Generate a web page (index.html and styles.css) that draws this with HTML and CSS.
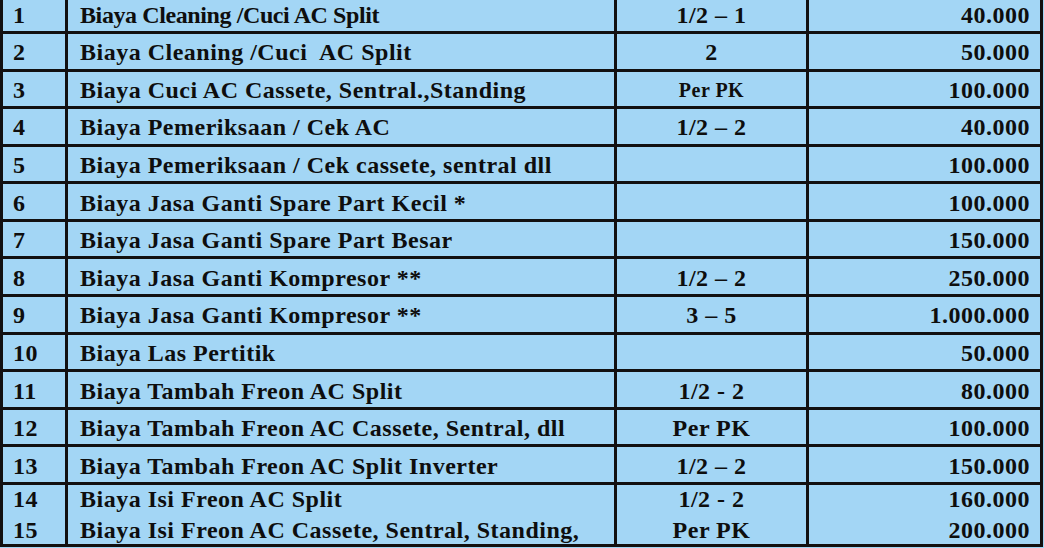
FILE: index.html
```html
<!DOCTYPE html>
<html>
<head>
<meta charset="utf-8">
<link rel="stylesheet" href="styles.css">
</head>
<body>
<div class="frame">
  <div class="table">
    <div class="cell no">1</div><div class="cell desc tight">Biaya Cleaning /Cuci AC Split</div><div class="cell pk">1/2 – 1</div><div class="cell price">40.000</div>
    <div class="cell no">2</div><div class="cell desc">Biaya Cleaning /Cuci&nbsp; AC Split</div><div class="cell pk">2</div><div class="cell price">50.000</div>
    <div class="cell no">3</div><div class="cell desc">Biaya Cuci AC Cassete, Sentral.,Standing</div><div class="cell pk small">Per PK</div><div class="cell price">100.000</div>
    <div class="cell no">4</div><div class="cell desc">Biaya Pemeriksaan / Cek AC</div><div class="cell pk">1/2 – 2</div><div class="cell price">40.000</div>
    <div class="cell no">5</div><div class="cell desc">Biaya Pemeriksaan / Cek cassete, sentral dll</div><div class="cell pk"></div><div class="cell price">100.000</div>
    <div class="cell no">6</div><div class="cell desc">Biaya Jasa Ganti Spare Part Kecil *</div><div class="cell pk"></div><div class="cell price">100.000</div>
    <div class="cell no">7</div><div class="cell desc">Biaya Jasa Ganti Spare Part Besar</div><div class="cell pk"></div><div class="cell price">150.000</div>
    <div class="cell no">8</div><div class="cell desc">Biaya Jasa Ganti Kompresor **</div><div class="cell pk">1/2 – 2</div><div class="cell price">250.000</div>
    <div class="cell no">9</div><div class="cell desc">Biaya Jasa Ganti Kompresor **</div><div class="cell pk">3 – 5</div><div class="cell price">1.000.000</div>
    <div class="cell no">10</div><div class="cell desc">Biaya Las Pertitik</div><div class="cell pk"></div><div class="cell price">50.000</div>
    <div class="cell no">11</div><div class="cell desc">Biaya Tambah Freon AC Split</div><div class="cell pk">1/2 - 2</div><div class="cell price">80.000</div>
    <div class="cell no">12</div><div class="cell desc">Biaya Tambah Freon AC Cassete, Sentral, dll</div><div class="cell pk">Per PK</div><div class="cell price">100.000</div>
    <div class="cell no">13</div><div class="cell desc">Biaya Tambah Freon AC Split Inverter</div><div class="cell pk">1/2 – 2</div><div class="cell price">150.000</div>
    <div class="cell no multi"><span>14</span><span>15</span></div><div class="cell desc multi"><span>Biaya Isi Freon AC Split</span><span>Biaya Isi Freon AC Cassete, Sentral, Standing,</span></div><div class="cell pk multi"><span>1/2 - 2</span><span>Per PK</span></div><div class="cell price multi"><span>160.000</span><span>200.000</span></div>
  </div>
</div>
</body>
</html>
```
FILE: styles.css
```css
html, body {
  margin: 0;
  padding: 0;
  background: #a3d6f5;
}
.frame {
  width: 1044px;
  height: 548px;
  overflow: hidden;
}
.table {
  margin-top: -6.7px;
  width: 1037px;
  padding: 3px;
  background: #121010;
  display: grid;
  grid-template-columns: 62px 546px 189px 231px;
  grid-template-rows: repeat(13, 34.6px) 58.9px;
  gap: 3px;
  font-family: "Liberation Serif", "Times New Roman", serif;
  font-weight: bold;
  font-size: 24px;
  letter-spacing: 0.5px;
  color: #0e0e0e;
}
.cell {
  background: #a3d6f5;
  display: flex;
  align-items: center;
  padding-top: 2px;
  box-sizing: border-box;
  line-height: 1;
  white-space: nowrap;
}
.no { padding-left: 10px; }
.desc { padding-left: 12px; }
.tight { letter-spacing: -0.4px; }
.pk { justify-content: center; }
.price { justify-content: flex-end; padding-right: 10px; }
.small { font-size: 20px; }
.multi {
  flex-direction: column;
  justify-content: center;
  align-items: flex-start;
  gap: 7px;
  padding-top: 0;
}
.pk.multi { align-items: center; }
.price.multi { align-items: flex-end; }
```
